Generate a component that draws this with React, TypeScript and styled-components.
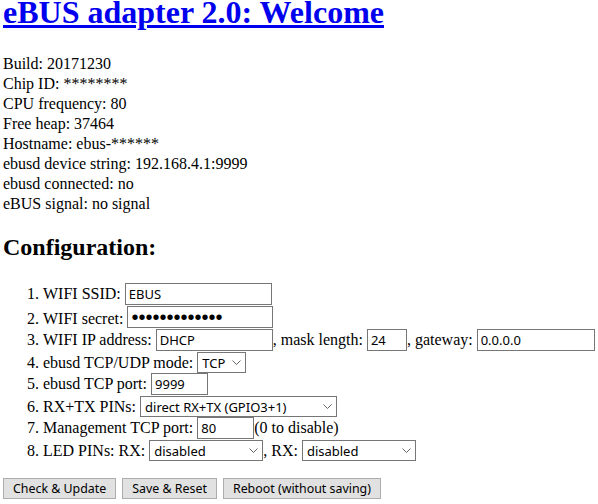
import styled, { createGlobalStyle } from 'styled-components'

const GlobalStyle = createGlobalStyle`
  body {
    margin: 0;
    background: #ffffff;
    color: #000000;
    font-family: "Liberation Serif", "Times New Roman", serif;
    font-size: 16px;
  }
`

const Page = styled.div`
  padding: 0 0 0 3px;
`

const Title = styled.h1`
  margin: 0;
  font-size: 32px;
  font-weight: bold;
  line-height: 25px;

  a {
    color: #0000ee;
    text-decoration: underline;
  }
`

const Info = styled.div`
  margin-top: 29px;
  line-height: 20px;
`

const Heading = styled.h2`
  margin: 19px 0 0;
  font-size: 24px;
  font-weight: bold;
  line-height: 28px;
`

const List = styled.ol`
  margin: 22px 0 0;
  padding-left: 40px;
`

const Row = styled.li`
  line-height: normal;
`

const control = `
  box-sizing: border-box;
  height: 22px;
  border: 1px solid #767676;
  border-radius: 0;
  background: #ffffff;
  color: #000000;
  font-family: "Noto Sans", "Open Sans", sans-serif;
  font-size: 13px;
  outline: none;
`

const TextInput = styled.input<{ $w: number }>`
  ${control}
  width: ${(p) => p.$w}px;
  margin: 0 0 1px;
  padding: 0 3px;
`

const SecretInput = styled(TextInput)`
  font-family: "Liberation Sans", Arial, sans-serif;
  font-size: 20px;
`

const SelectWrap = styled.span<{ $w: number }>`
  position: relative;
  display: inline-block;
  width: ${(p) => p.$w}px;

  svg {
    position: absolute;
    right: 5px;
    top: 8px;
    pointer-events: none;
  }
`

const Select = styled.select`
  ${control}
  height: 21px;
  width: 100%;
  margin: 0;
  padding: 0 16px 0 4px;
  appearance: none;
  -webkit-appearance: none;
`

const Buttons = styled.div`
  display: flex;
  gap: 6px;
  margin-top: 17px;
`

const Button = styled.button`
  box-sizing: border-box;
  height: 21px;
  padding: 0 9px;
  border: 1px solid #adadad;
  border-radius: 0;
  background: #e1e1e1;
  color: #000000;
  font-family: "Noto Sans", "Open Sans", sans-serif;
  font-size: 12.4px;
  line-height: 19px;
`

function Chevron() {
  return (
    <svg width="9" height="5" viewBox="0 0 9 5">
      <polyline points="0.5,0.5 4.5,4.5 8.5,0.5" fill="none" stroke="#555" strokeWidth="0.9" />
    </svg>
  )
}

function Dropdown({ width, value, options }: { width: number; value: string; options: string[] }) {
  return (
    <SelectWrap $w={width}>
      <Select defaultValue={value}>
        {options.map((o) => (
          <option key={o} value={o}>{o}</option>
        ))}
      </Select>
      <Chevron />
    </SelectWrap>
  )
}

const info = [
  'Build: 20171230',
  'Chip ID: ********',
  'CPU frequency: 80',
  'Free heap: 37464',
  'Hostname: ebus-******',
  'ebusd device string: 192.168.4.1:9999',
  'ebusd connected: no',
  'eBUS signal: no signal',
]

const ledOptions = ['disabled', 'GPIO2', 'GPIO4', 'GPIO5']

export default function App() {
  return (
    <Page>
      <GlobalStyle />
      <Title>
        <a href="#">eBUS adapter 2.0: Welcome</a>
      </Title>
      <Info>
        {info.map((line) => (
          <div key={line}>{line}</div>
        ))}
      </Info>
      <Heading>Configuration:</Heading>
      <form onSubmit={(e) => e.preventDefault()}>
        <List>
          <Row>
            WIFI SSID: <TextInput $w={147} defaultValue="EBUS" />
          </Row>
          <Row>
            WIFI secret: <SecretInput $w={146} type="password" defaultValue="ebusebusebus1" />
          </Row>
          <Row>
            WIFI IP address: <TextInput $w={117} defaultValue="DHCP" />, mask length:{' '}
            <TextInput $w={40} defaultValue="24" />, gateway: <TextInput $w={118} defaultValue="0.0.0.0" />
          </Row>
          <Row>
            ebusd TCP/UDP mode: <Dropdown width={49} value="TCP" options={['TCP', 'UDP']} />
          </Row>
          <Row>
            ebusd TCP port: <TextInput $w={57} defaultValue="9999" />
          </Row>
          <Row>
            RX+TX PINs:{' '}
            <Dropdown
              width={197}
              value="direct RX+TX (GPIO3+1)"
              options={['direct RX+TX (GPIO3+1)', 'alternate RX+TX (GPIO13+15)']}
            />
          </Row>
          <Row>
            Management TCP port: <TextInput $w={57} defaultValue="80" />(0 to disable)
          </Row>
          <Row>
            LED PINs: RX: <Dropdown width={114} value="disabled" options={ledOptions} />, RX:{' '}
            <Dropdown width={114} value="disabled" options={ledOptions} />
          </Row>
        </List>
        <Buttons>
          <Button type="button">Check &amp; Update</Button>
          <Button type="submit">Save &amp; Reset</Button>
          <Button type="button">Reboot (without saving)</Button>
        </Buttons>
      </form>
    </Page>
  )
}
